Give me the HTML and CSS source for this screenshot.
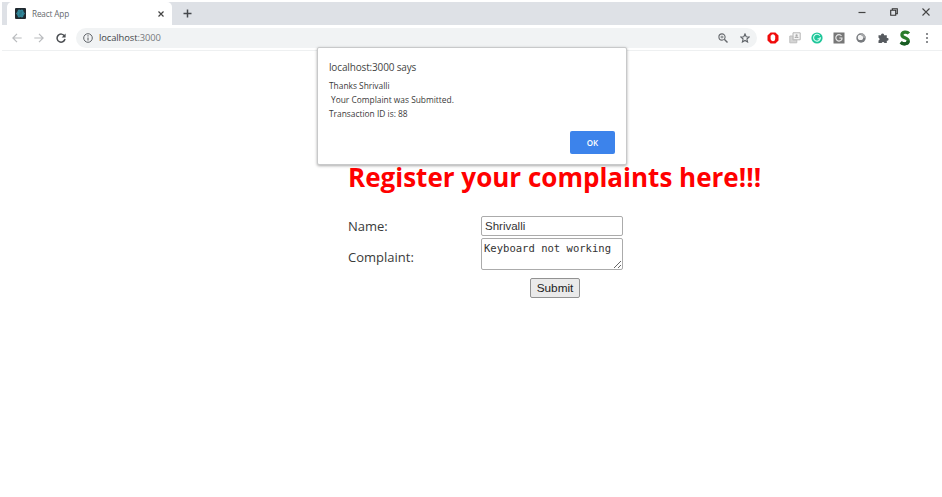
FILE: index.html
```html
<!DOCTYPE html>
<html lang="en">
<head>
<meta charset="utf-8">
<title>React App</title>
<link rel="stylesheet" href="styles.css">
</head>
<body>
<div class="browser">
  <header class="tabstrip">
    <div class="tab">
      <svg class="favicon" width="11" height="11" viewBox="0 0 11 11"><rect width="11" height="11" rx="1" fill="#20292f"/><g fill="#2b7789" stroke="#358da1" stroke-width=".8"><ellipse cx="5.5" cy="5.5" rx="4" ry="1.7"/><ellipse cx="5.5" cy="5.5" rx="4" ry="1.7" transform="rotate(60 5.5 5.5)"/><ellipse cx="5.5" cy="5.5" rx="4" ry="1.7" transform="rotate(120 5.5 5.5)"/></g></svg>
      <span class="tab-title">React App</span>
      <svg class="tab-close" width="6" height="6" viewBox="0 0 6 6"><path d="M.5.5l5 5M5.5.5l-5 5" stroke="#444" stroke-width="1.2"/></svg>
    </div>
    <svg class="new-tab" width="9" height="9" viewBox="0 0 9 9"><path d="M4.5.5v8M.5 4.5h8" stroke="#45484c" stroke-width="1.5"/></svg>
    <div class="window-buttons">
      <svg width="8" height="8" viewBox="0 0 8 8"><path d="M.5 4.5h7" stroke="#444" stroke-width="1.2"/></svg>
      <svg width="8" height="8" viewBox="0 0 8 8"><path d="M.7 2.3h5v5h-5zM2.3 2.2V.7h5v5H5.8" fill="none" stroke="#333" stroke-width="1.1"/></svg>
      <svg width="8" height="8" viewBox="0 0 8 8"><path d="M.5.5l7 7M7.5.5l-7 7" stroke="#444" stroke-width="1.1"/></svg>
    </div>
  </header>
  <nav class="toolbar">
    <div class="nav-buttons">
      <svg width="10" height="10" viewBox="0 0 10 10"><path d="M9.7 5H1M5 .9L.9 5 5 9.1" fill="none" stroke="#b9bbbe" stroke-width="1.2"/></svg>
      <svg width="10" height="10" viewBox="0 0 10 10"><path d="M.3 5H9M5 .9L9.1 5 5 9.1" fill="none" stroke="#b9bbbe" stroke-width="1.2"/></svg>
      <svg width="10" height="10" viewBox="0 0 10 10"><path d="M8.5 3A4 4 0 1 0 9 6" fill="none" stroke="#4c4f53" stroke-width="1.5"/><path d="M9.6.4v4H5.6z" fill="#4c4f53"/></svg>
    </div>
    <div class="address">
      <svg width="10" height="10" viewBox="0 0 10 10"><circle cx="5" cy="5" r="4.3" fill="none" stroke="#5f6368"/><path d="M5 4.4v3.2M5 2.3v1.1" stroke="#5f6368" stroke-width="1.1"/></svg>
      <span class="url">localhost<span class="port">:3000</span></span>
      <svg class="magnify" width="10" height="10" viewBox="0 0 10 10"><circle cx="4" cy="4" r="3.1" fill="none" stroke="#66696d" stroke-width="1.1"/><path d="M6.3 6.3l3.2 3.2" stroke="#66696d" stroke-width="1.4"/><path d="M2.5 4h3" stroke="#66696d" stroke-width="1"/><path d="M4 2.5v3" stroke="#66696d" stroke-width=".6"/></svg>
      <svg width="10" height="10" viewBox="0 0 10 10"><path d="M5 .9l1.2 2.8 3 .3-2.3 2 .7 3L5 7.5 2.4 9l.7-3L.8 4l3-.3z" fill="none" stroke="#5f6368" stroke-width="1.1"/></svg>
    </div>
    <div class="extensions">
      <svg width="12" height="12" viewBox="0 0 12 12"><path d="M3.6.5h4.8l3.1 3.1v4.8l-3.1 3.1H3.6L.5 8.4V3.6z" fill="#f00b0b"/><path d="M3.6 4q0-.8.8-.8.1-.9.9-.6.6-.8 1.2 0 .8-.2.9.6.8 0 .8.8v2.9Q8 9.3 6 9.3 4.4 9.3 3.6 7.2z" fill="#fff"/></svg>
      <svg width="12" height="12" viewBox="0 0 12 12"><path d="M4 .8h7.2v7H4z" fill="#f5f5f5" stroke="#b4b4b4"/><path d="M.8 4h3v4h4v2.8h-7z" fill="#d5d5d5" stroke="#bebebe"/><path d="M6 5.9c.2-1 2.9-1 3.2 0" stroke="#aaa" stroke-width="1.2" fill="none"/><circle cx="7.6" cy="3.4" r="1.1" fill="#aaa"/></svg>
      <svg width="12" height="12" viewBox="0 0 12 12"><circle cx="6" cy="6" r="5.6" fill="#20c69a"/><path d="M8.8 3.8a3.4 3.4 0 1 0 .4 3H6.5M9.2 5v2" fill="none" stroke="#d8fff3" stroke-width="1.1"/></svg>
      <svg width="12" height="12" viewBox="0 0 12 12"><rect x=".5" y=".5" width="11" height="11" fill="#777"/><path d="M8.5 3.8a3.2 3.2 0 1 0 .4 3.4V6H6.3" fill="none" stroke="#e6e6e6" stroke-width="1.2"/></svg>
      <svg width="12" height="12" viewBox="0 0 12 12"><circle cx="6" cy="6" r="4.7" fill="#777a7e"/><circle cx="5.5" cy="5.4" r="2.7" fill="#f4f4f4"/><path d="M6 1.3A4.7 4.7 0 0 1 10.7 6H8.2C8.2 4.5 7.3 3.6 6 3.6z" fill="#a4a6a8"/></svg>
      <svg width="12" height="12" viewBox="0 0 12 12"><path d="M1.5 3.3h2.6a1.5 1.5 0 1 1 2.9 0h2.8V6a1.4 1.4 0 1 1 0 2.7V11H7.4a1.4 1.4 0 0 0-2.7 0H1.5V8.5a1.4 1.4 0 0 0 0-2.7z" fill="#565a5f"/></svg>
      <svg width="12" height="16" viewBox="0 0 12 16"><path d="M9.9 3.6C8 1.3 2.9 1.6 2.9 5c0 3.2 6.3 2.3 6.3 5.7 0 3.7-5 3.9-7.5 1.7" fill="none" stroke="#2b7c2b" stroke-width="3.2"/><path d="M9.2 10.7c0 3.7-5 3.9-7.5 1.7" fill="none" stroke="#195c23" stroke-width="3.2"/></svg>
      <svg width="12" height="12" viewBox="0 0 12 12"><g fill="#66696d"><circle cx="6" cy="2" r="1"/><circle cx="6" cy="6" r="1"/><circle cx="6" cy="10" r="1"/></g></svg>
    </div>
  </nav>
  <main class="page">
    <h1>Register your complaints here!!!</h1>
    <form class="complaint-form">
      <label for="name">Name:</label>
      <input id="name" class="field" type="text" value="Shrivalli">
      <label class="complaint-label" for="complaint">Complaint:</label>
      <textarea id="complaint" class="field area" spellcheck="false">Keyboard not working</textarea>
      <button class="submit" type="button">Submit</button>
    </form>
  </main>
  <section class="dialog" role="alertdialog">
    <h2>localhost:3000 says</h2>
    <p>Thanks Shrivalli</p>
    <p class="indented">Your Complaint was Submitted.</p>
    <p>Transaction ID is: 88</p>
    <button class="ok" type="button">OK</button>
  </section>
</div>
</body>
</html>
```
FILE: styles.css
```css
* { box-sizing: border-box; }
body { margin: 0; background: #fff; color: #3a3a3a; font-family: "Open Sans", "Noto Sans", sans-serif; }
svg { display: block; flex: none; }
.browser { position: relative; height: 497px; padding: 2px 0 0 2px; overflow: hidden; }
.tabstrip { display: flex; align-items: center; height: 23px; padding-left: 5px; background: #dee1e6; }
.tab { display: flex; align-items: center; width: 165px; height: 23px; padding: 0 8px 0 8px; border-radius: 5px 5px 0 0; background: #fff; }
.tab-title { margin: -1px 0 0 6px; font-size: 8.2px; color: #66696d; letter-spacing: -.15px; }
.tab-close { margin-left: auto; }
.new-tab { margin-left: 11px; }
.window-buttons { display: flex; gap: 24px; margin: -4px 12px 0 auto; }
.toolbar { display: flex; align-items: center; height: 26px; border-bottom: 1px solid #eef0f1; }
.nav-buttons { display: flex; gap: 12px; padding-left: 10px; }
.address { display: flex; align-items: center; width: 681px; height: 20px; margin-left: 10px; padding: 0 7px; border-radius: 10px; background: #f1f3f4; }
.url { margin-left: 6px; font-size: 9.4px; letter-spacing: -.1px; color: #44474a; }
.port { color: #777a7e; }
.magnify { margin: 0 12px 0 auto; }
.extensions { display: flex; align-items: center; gap: 10px; margin-left: 10px; }
.page { padding: 108px 0 0 346px; }
h1 { margin: 0; font-size: 26.03px; line-height: 36px; font-weight: 700; color: #f00; white-space: nowrap; }
.complaint-form { display: grid; grid-template-columns: 133px 142px; grid-template-rows: 20px 32px 20px; row-gap: 2px; align-items: center; margin-top: 21px; font-size: 13px; }
.complaint-label { padding-top: 6px; }
.field { width: 142px; height: 20px; margin: 0; padding: 0 3px 1px; border: 1px solid #ababab; border-radius: 2px; background: #fff; color: #333; font: 11.5px "Liberation Sans", sans-serif; outline: 0; }
.area { height: 32px; padding: 2px; overflow: hidden; resize: both; font: 10.55px/14px "DejaVu Sans Mono", monospace; }
.submit { grid-column: 2; justify-self: center; width: 50px; height: 20px; margin: 12px 0 0 6px; padding: 0; border: 1px solid #929292; border-radius: 2px; background: #eaeaea; color: #222; font: 11.8px "Liberation Sans", sans-serif; }
.dialog { position: absolute; left: 317px; top: 47px; width: 310px; height: 118px; padding: 11px 11px 12px; border: 1px solid #c8c9ca; border-radius: 2px; background: #fff; box-shadow: 0 1px 3px #0005; }
.dialog h2 { margin: 0 0 4px; font-size: 10px; letter-spacing: -.15px; line-height: 16px; font-weight: 400; color: #444; }
.dialog p { margin: 0; font-size: 8.4px; line-height: 14px; }
.dialog .indented { padding-left: 2px; }
.ok { display: block; width: 45px; height: 23px; margin: 10px 0 0 auto; padding: 0; border: 0; border-radius: 2px; background: #3c83eb; color: #fff; font: 600 8px "Open Sans", sans-serif; }
```
